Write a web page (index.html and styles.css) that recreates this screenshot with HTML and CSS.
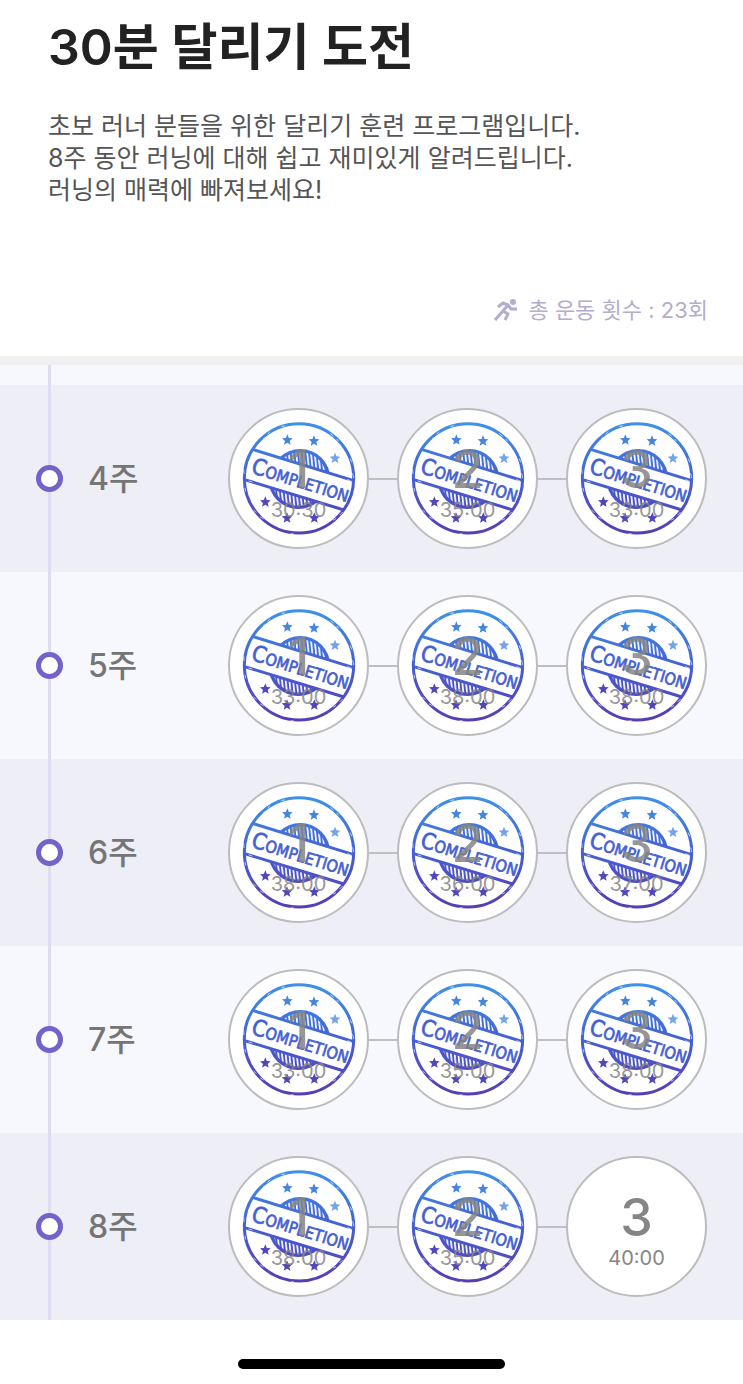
FILE: index.html
```html
<!DOCTYPE html>
<html lang="ko">
<head>
<meta charset="utf-8">
<meta name="viewport" content="width=device-width, initial-scale=1">
<title>30분 달리기 도전</title>
<link rel="stylesheet" href="styles.css">
</head>
<body>
<svg class="defs" aria-hidden="true">
  <defs>
    <linearGradient id="ink" gradientUnits="userSpaceOnUse" x1="0" y1="68" x2="0" y2="404">
      <stop offset="0" stop-color="#3d92ea"/>
      <stop offset=".5" stop-color="#4560d2"/>
      <stop offset="1" stop-color="#583cb2"/>
    </linearGradient>
    <pattern id="hatch" patternUnits="userSpaceOnUse" width="11" height="20" patternTransform="rotate(-6)">
      <rect width="5" height="20" fill="#fff"/>
    </pattern>
    <clipPath id="above"><path d="M60 60H420V247L60 137Z"/></clipPath>
    <clipPath id="below"><path d="M60 237L420 347V420H60Z"/></clipPath>
    <path id="star" d="M0-17 4.500-6 16-5 7 3 10 14 0 8-10 14-7 3-16-5-4.500-6Z"/>
    <g id="seal">
      <g clip-path="url(#above)">
        <circle cx="242" cy="238" r="90" fill="url(#ink)"/>
        <circle cx="242" cy="238" r="80" fill="url(#hatch)"/>
      </g>
      <g clip-path="url(#below)">
        <circle cx="236" cy="238" r="90" fill="url(#ink)"/>
        <circle cx="236" cy="238" r="80" fill="url(#hatch)"/>
      </g>
      <g fill="none" stroke="url(#ink)" stroke-width="9">
        <circle cx="238" cy="236" r="164"/>
        <path d="M101 150 402 243M75 240 373 331"/>
      </g>
      <text class="seal-text" transform="translate(92 219) rotate(17)"><tspan class="seal-initial">C</tspan>OMPLETION</text>
      <g fill="#4385df">
        <use href="#star" x="203" y="121"/>
        <use href="#star" x="283" y="124"/>
        <use href="#star" x="346" y="176" opacity=".75"/>
      </g>
      <g fill="#5147bd">
        <use href="#star" x="137" y="307"/>
        <use href="#star" x="202" y="355"/>
        <use href="#star" x="284" y="355"/>
      </g>
      <g fill="none" stroke="#fff" stroke-width="3" stroke-linecap="round" opacity=".65">
        <path d="M132 116l8-3M145 103l5-6M186 80l9-1M333 102l8 7M352 119l4 5M392 178l4 9M399 222l3 12M72 210l1 12M76 266l2 8M102 331l7 7M122 352l9 5M361 345l7-7M341 361l7-4M214 402l8 1M384 240l10 4M88 244l9 3"/>
      </g>
    </g>
  </defs>
</svg>

<header class="intro">
  <h1 class="title">30분 달리기 도전</h1>
  <p class="lead">초보 러너 분들을 위한 달리기 훈련 프로그램입니다.<br>8주 동안 러닝에 대해 쉽고 재미있게 알려드립니다.<br>러닝의 매력에 빠져보세요!</p>
  <p class="total">
    <svg class="runner" viewBox="0 0 24 24" aria-hidden="true">
      <circle cx="19" cy="4" r="3"/>
      <path d="M4 9 9 5 14 7 9 13 1 22M9 13 14 16 11 22M14 7 17 11H23"/>
    </svg>
    <span>총 운동 횟수 : 23회</span>
  </p>
</header>

<main class="weeks" id="weeks"></main>
<footer class="home"><div class="home-bar"></div></footer>
<script src="app.js"></script>
</body>
</html>
```
FILE: styles.css
```css
* { box-sizing: border-box; }

body {
  margin: 0;
  background: #fff;
  font-family: Inter, "Noto Sans CJK KR", sans-serif;
}

.defs { position: absolute; width: 0; height: 0; }

.intro {
  padding: 16px 35px 30px 48px;
  border-bottom: 9px solid #f0f0f0;
}

.title {
  margin: 0;
  font-size: 50px;
  line-height: 62px;
  font-weight: 600;
  color: #222;
}

.lead {
  margin: 32px 0 0;
  font-size: 25px;
  line-height: 32px;
  color: #555;
}

.total {
  display: flex;
  justify-content: flex-end;
  align-items: center;
  gap: 10px;
  margin: 88px 0 0;
  font-size: 22px;
  line-height: 32px;
  color: #b3adcf;
}

.runner { width: 24px; height: 24px; fill: #b3adcf; }
.runner path {
  fill: none;
  stroke: #b3adcf;
  stroke-width: 3;
  stroke-linejoin: round;
}

.weeks {
  padding-top: 20px;
  background: linear-gradient(#dfdcf1, #dfdcf1) 48px 0 / 3px 100% no-repeat, #f6f8fd;
}

.week {
  display: flex;
  align-items: center;
  height: 187px;
  padding: 0 36px;
}

.week:nth-child(odd) {
  background: linear-gradient(#dfdcf1, #dfdcf1) 48px 0 / 3px 100% no-repeat, #edeef6;
}

.dot {
  width: 27px;
  height: 27px;
  border: 5px solid #7462ca;
  border-radius: 50%;
  background: #fff;
}

.week-name {
  margin: 0 auto 0 25px;
  font-size: 32px;
  line-height: 40px;
  font-weight: 500;
  color: #757575;
}

.sessions {
  display: flex;
  align-items: center;
  margin: 0;
  padding: 0;
  list-style: none;
}

.session { display: flex; align-items: center; }
.session + .session::before {
  content: "";
  width: 28px;
  height: 2px;
  background: #bfbfc3;
}

.disc {
  display: grid;
  width: 141px;
  height: 141px;
  border: 2px solid #bcbcbe;
  border-radius: 50%;
  background: #fff;
}

.seal, .label { grid-area: 1 / 1; }
.seal { width: 137px; height: 137px; }

.seal-text {
  font-family: "DejaVu Sans Condensed", "DejaVu Sans", sans-serif;
  font-stretch: condensed;
  font-size: 49px;
  fill: #4560d2;
  stroke: #4560d2;
  stroke-width: 2px;
}
.seal-initial { font-size: 68px; }

.label {
  display: flex;
  flex-direction: column;
  align-items: center;
  justify-content: center;
  padding-top: 7px;
  color: #858585;
}
.done .label { opacity: .85; }

.number { font-size: 52px; line-height: 56px; font-weight: 500; }
.time { font-size: 20px; line-height: 24px; }

.home {
  display: flex;
  justify-content: center;
  padding: 39px 0 15px;
}
.home-bar {
  width: 36%;
  height: 10px;
  border-radius: 5px;
  background: #000;
}
```
FILE: app.js
```js
const weeks = [
  [4, ["30:30", "35:00", "33:00"], 3],
  [5, ["33:00", "38:00", "38:00"], 3],
  [6, ["38:00", "36:00", "37:00"], 3],
  [7, ["33:00", "35:00", "38:00"], 3],
  [8, ["38:00", "35:00", "40:00"], 2]
];

const seal = '<svg class="seal" viewBox="31 31 411 411" aria-hidden="true"><use href="#seal"/></svg>';

document.getElementById("weeks").innerHTML = weeks.map(([week, times, completed]) => `
  <section class="week">
    <span class="dot"></span>
    <h2 class="week-name">${week}주</h2>
    <ol class="sessions">${times.map((time, i) => `
      <li class="session">
        <div class="disc ${i < completed ? "done" : ""}">
          ${i < completed ? seal : ""}
          <div class="label"><span class="number">${i + 1}</span><span class="time">${time}</span></div>
        </div>
      </li>`).join("")}
    </ol>
  </section>`).join("");
```
